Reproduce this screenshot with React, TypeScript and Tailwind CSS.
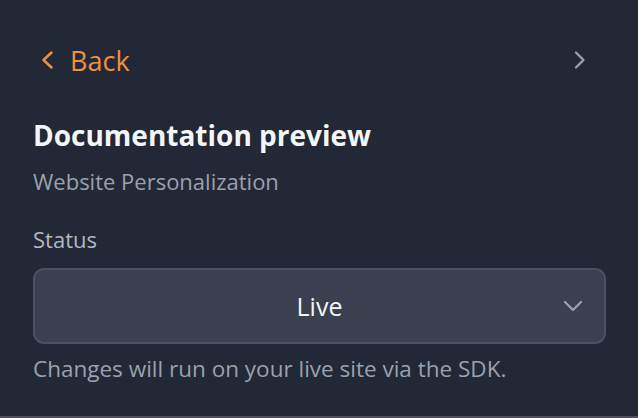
import React from "react";

export default function App() {
  return (
    <div className="w-[638px] h-[418px] bg-[#222835] flex flex-col" style={{ fontFamily: "'Open Sans', 'Noto Sans', sans-serif" }}>
      <div className="flex-1 px-[33px]">
        <div className="flex items-center justify-between h-[40px] mt-[40px]">
          <div className="flex items-center gap-[16px] text-[#f0913e]">
            <svg width="14" height="20" viewBox="0 0 14 20" fill="none" stroke="currentColor" strokeWidth="2.5" strokeLinecap="round" strokeLinejoin="round" className="ml-[7px]">
              <path d="M11.5 2.5 L3.5 10 L11.5 17.5" />
            </svg>
            <span className="text-[27px] leading-none">Back</span>
          </div>
          <svg width="14" height="20" viewBox="0 0 14 20" fill="none" stroke="#9aa0ad" strokeWidth="2.3" strokeLinecap="round" strokeLinejoin="round" className="mr-[18px]">
            <path d="M3 2.5 L10.5 10 L3 17.5" />
          </svg>
        </div>
        <div className="mt-[38px] text-[28px] font-bold text-[#f4f5f7] leading-[34px]">Documentation preview</div>
        <div className="mt-[16px] text-[22px] text-[#9ba1ad] leading-[26px]">Website Personalization</div>
        <div className="mt-[32px] text-[22px] text-[#b3b8c2] leading-[26px]">Status</div>
        <div className="mt-[16px] h-[76px] w-[573px] rounded-[11px] border-2 border-[#4a5161] bg-[#3a4050] flex items-center relative">
          <span className="flex-1 text-center text-[25px] text-[#f4f5f7] leading-none">Live</span>
          <svg width="20" height="12" viewBox="0 0 20 12" fill="none" stroke="#9aa0ad" strokeWidth="2.3" strokeLinecap="round" strokeLinejoin="round" className="absolute right-[21px] top-1/2 -translate-y-1/2">
            <path d="M2 2 L10 10 L18 2" />
          </svg>
        </div>
        <div className="mt-[12px] text-[22.5px] text-[#9ba1ad] leading-[26px]">Changes will run on your live site via the SDK.</div>
      </div>
      <div className="h-[2px] bg-[#4b5160]" />
    </div>
  );
}
